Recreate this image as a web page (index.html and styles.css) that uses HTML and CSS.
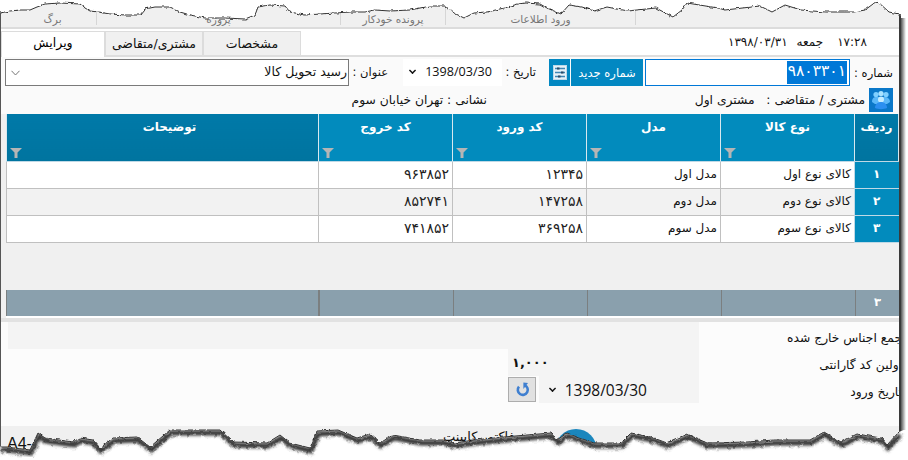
FILE: index.html
```html
<!DOCTYPE html>
<html lang="fa">
<head>
<meta charset="utf-8">
<title>ویرایش</title>
<link rel="stylesheet" href="styles.css">
</head>
<body>
<div class="window" dir="rtl">
  <div class="ribbon">
    <span class="rib r1"></span>
    <span class="rib r2">ورود اطلاعات</span>
    <span class="rib r3">پرونده خودکار</span>
    <span class="rib r4">پروژه</span>
    <span class="rib r5">برگ</span>
  </div>
  <div class="tabrow">
    <div class="clock"><span>۱۷:۲۸</span><span>جمعه</span><span>۱۳۹۸/۰۳/۳۱</span></div>
    <div class="tabs" dir="ltr">
      <div class="tab active">ویرایش</div>
      <div class="tab">مشتری/متقاضی</div>
      <div class="tab">مشخصات</div>
    </div>
  </div>
  <div class="formrow">
    <span class="lbl lbl-num">شماره :</span>
    <div class="numbox"><span class="sel">۹۸۰۳۳۰۱</span></div>
    <button class="bluebtn">شماره جدید</button>
    <div class="iconbtn">
      <svg width="14" height="15" viewBox="0 0 14 15"><rect x="0.5" y="0.5" width="13" height="14" fill="#e8f2f8" stroke="#bcd9ea"/><path d="M2 3.5h10M2 7.5h10M2 11.5h10" stroke="#3f86b5" stroke-width="1.3"/><rect x="4" y="2.5" width="2.5" height="2" fill="#2a4a66"/><rect x="8" y="6.5" width="2.5" height="2" fill="#2a4a66"/><rect x="5" y="10.5" width="2.5" height="2" fill="#2a4a66"/></svg>
    </div>
    <span class="lbl lbl-date">تاریخ :</span>
    <div class="datebox"><span class="dt" dir="ltr">1398/03/30</span><span class="chev"></span></div>
    <span class="lbl lbl-title">عنوان :</span>
    <div class="combo"><span>رسید تحویل کالا</span><svg class="combo-arrow" width="9" height="6" viewBox="0 0 9 6"><path d="M.5 .8L4.5 5 8.5 .8" fill="none" stroke="#777"/></svg></div>
  </div>
  <div class="inforow">
    <div class="people">
      <svg width="24" height="24" viewBox="0 0 24 24"><circle cx="7" cy="6.5" r="2.6" fill="#7fd0ff"/><circle cx="17" cy="6.5" r="2.6" fill="#7fd0ff"/><circle cx="12" cy="5.5" r="2.6" fill="#a8e2ff"/><path d="M3 14c0-4 2-5 4-5s10 0 10 0 4 1 4 5l-3 2H6z" fill="#5ab8f8"/><circle cx="12" cy="11.5" r="3" fill="#c4ecff"/><path d="M6 20c0-4 3-6 6-6s6 2 6 6c-3 1.5-9 1.5-12 0z" fill="#2b8ff0"/></svg>
    </div>
    <span class="cust">مشتری / متقاضی :&nbsp;&nbsp; مشتری اول</span>
    <span class="addr">نشانی : تهران خیابان سوم</span>
  </div>
  <div class="gridwrap">
    <table class="grid">
      <colgroup>
        <col class="c-r"><col class="c-m"><col class="c-m"><col class="c-m"><col class="c-m"><col>
      </colgroup>
      <thead>
        <tr>
          <th class="dark">ردیف</th>
          <th>نوع کالا<svg class="fn" viewBox="0 0 12 10"><path d="M0 0h12L7.5 4.5V10h-3V4.5z"/></svg></th>
          <th>مدل<svg class="fn" viewBox="0 0 12 10"><path d="M0 0h12L7.5 4.5V10h-3V4.5z"/></svg></th>
          <th>کد ورود<svg class="fn" viewBox="0 0 12 10"><path d="M0 0h12L7.5 4.5V10h-3V4.5z"/></svg></th>
          <th>کد خروج<svg class="fn" viewBox="0 0 12 10"><path d="M0 0h12L7.5 4.5V10h-3V4.5z"/></svg></th>
          <th class="dark last">توضیحات<svg class="fn" viewBox="0 0 12 10"><path d="M0 0h12L7.5 4.5V10h-3V4.5z"/></svg></th>
        </tr>
      </thead>
      <tbody>
        <tr><td class="idx">۱</td><td>کالای نوع اول</td><td>مدل اول</td><td class="num">۱۲۳۴۵</td><td class="num">۹۶۳۸۵۲</td><td></td></tr>
        <tr class="alt"><td class="idx">۲</td><td>کالای نوع دوم</td><td>مدل دوم</td><td class="num">۱۴۷۲۵۸</td><td class="num">۸۵۲۷۴۱</td><td></td></tr>
        <tr><td class="idx">۳</td><td>کالای نوع سوم</td><td>مدل سوم</td><td class="num">۳۶۹۲۵۸</td><td class="num">۷۴۱۸۵۲</td><td></td></tr>
      </tbody>
    </table>
    <div class="gridgap"></div>
    <div class="totals">
      <div class="tc t-r">۳</div><div class="tc t-m"></div><div class="tc t-m"></div><div class="tc t-m"></div><div class="tc t-m"></div><div class="tc t-l"></div>
    </div>
  </div>
  <div class="divider"></div>
  <div class="details">
    <div class="labels">
      <div class="dl">جمع اجناس خارج شده</div>
      <div class="dl">اولین کد گارانتی</div>
      <div class="dl">تاریخ ورود</div>
    </div>
    <div class="values">
      <div class="v-top"></div>
      <div class="v-mid">
        <div class="v-panel">
          <div class="amount">۱,۰۰۰</div>
          <div class="date2">
            <div class="field"><span class="dt2" dir="ltr">1398/03/30</span><span class="chev"></span></div>
            <button class="refresh"><svg width="15" height="15" viewBox="0 0 15 15"><path d="M4 4.6A5 5 0 1 0 9.6 3.2" fill="none" stroke="#3f7fd0" stroke-width="2.6"/><path d="M8.4 0.4L13 1 8.4 7z" fill="#3f7fd0"/></svg></button>
          </div>
        </div>
        <div class="v-side"></div>
      </div>
    </div>
  </div>
  <div class="footer">
    <span class="foot-a" dir="ltr">A4-</span>
    <span class="foot-b">فاکتور کابینت</span>
    <span class="foot-c"></span>
  </div>
</div>
<svg class="tear" width="908" height="460" viewBox="0 0 908 460" aria-hidden="true">
  <defs>
    <filter id="rough" x="-2%" y="-10%" width="104%" height="120%" color-interpolation-filters="sRGB">
      <feTurbulence type="fractalNoise" baseFrequency="0.22" numOctaves="2" seed="4"/>
      <feDisplacementMap in="SourceGraphic" scale="3.5" xChannelSelector="R" yChannelSelector="G"/>
    </filter>
    <filter id="soft" x="-2%" y="-20%" width="104%" height="140%"><feGaussianBlur stdDeviation="1.8"/></filter>
    <linearGradient id="rs" x1="0" x2="1" y1="0" y2="0"><stop offset="0" stop-color="#555"/><stop offset="1" stop-color="#fff"/></linearGradient>
    <clipPath id="below"><path d="M-5 447L7 447L30 450L38 433L45 438L73 442L80 438L93 440L100 448L113 438L137 437L150 447L170 430L220 430L233 442L267 443L280 435L290 443L310 448L317 431L338 430L357 438L370 434L380 443L393 435L420 440L443 440L454 443L474 440L504 437L527 435L551 433L557 440L567 433L577 437L594 443L621 443L631 433L651 437L667 443L687 434L707 443L747 442L774 440L810 440L824 432L841 442L857 434L881 438L887 445L899 432L915 425V465H-5Z"/></clipPath>
  </defs>
  <rect x="901" y="18" width="5" height="415" fill="url(#rs)"/>
  <g filter="url(#rough)">
    <path class="paper" d="M-5 -5H915V16L899 14L889 12L877 1L865 10L854 12L847 12L825 12L801 10L785 5L772 12L760 6L725 10L718 8L687 3L682 10L673 17L656 8L627 11L607 7L594 11L582 7L569 5L561 14L547 8L540 4L525 3L518 4L504 8L487 12L474 13L464 18L454 13L445 6L430 6L420 8L410 10L390 11L375 10L365 12L350 12L335 13L320 14L305 15L290 12L285 6L270 5L258 7L255 15L245 19L225 18L205 18L190 15L180 12L170 7L155 7L145 9L140 15L125 15L110 14L98 12L90 11L85 8L80 4L70 3L60 3L48 3L45 4L37 7L30 10L20 10L10 11L0 13L-5 13Z"/>
    <path class="paper" d="M-5 447L7 447L30 450L38 433L45 438L73 442L80 438L93 440L100 448L113 438L137 437L150 447L170 430L220 430L233 442L267 443L280 435L290 443L310 448L317 431L338 430L357 438L370 434L380 443L393 435L420 440L443 440L454 443L474 440L504 437L527 435L551 433L557 440L567 433L577 437L594 443L621 443L631 433L651 437L667 443L687 434L707 443L747 442L774 440L810 440L824 432L841 442L857 434L881 438L887 445L899 432L915 425V465H-5Z"/>
    <g clip-path="url(#below)">
      <path class="shade" filter="url(#soft)" d="M0 447L7 447L30 450L38 433L45 438L73 442L80 438L93 440L100 448L113 438L137 437L150 447L170 430L220 430L233 442L267 443L280 435L290 443L310 448L317 431L338 430L357 438L370 434L380 443L393 435L420 440L443 440L454 443L474 440L504 437L527 435L551 433L557 440L567 433L577 437L594 443L621 443L631 433L651 437L667 443L687 434L707 443L747 442L774 440L810 440L824 432L841 442L857 434L881 438L887 445L899 432"/>
    </g>
    <path class="edge" d="M0 447L7 447L30 450L38 433L45 438L73 442L80 438L93 440L100 448L113 438L137 437L150 447L170 430L220 430L233 442L267 443L280 435L290 443L310 448L317 431L338 430L357 438L370 434L380 443L393 435L420 440L443 440L454 443L474 440L504 437L527 435L551 433L557 440L567 433L577 437L594 443L621 443L631 433L651 437L667 443L687 434L707 443L747 442L774 440L810 440L824 432L841 442L857 434L881 438L887 445L899 432"/>
    <path class="edge" d="M0 13L10 11L20 10L30 10L37 7L45 4L60 3L80 4L85 8L90 11L98 12L110 14L125 15L140 15L145 9L155 7L170 7L180 12L190 15L205 18L225 18L245 19L255 15L258 7L270 5L285 6L290 12L305 15L320 14L335 13L350 12L365 12L375 10L390 11L410 10L420 8L430 6L445 6L454 13L464 18L474 13L487 12L504 8L518 4L525 3L540 4L547 8L561 14L569 5L582 7L594 11L607 7L627 11L656 8L673 17L682 10L687 3L718 8L725 10L760 6L772 12L785 5L801 10L825 12L847 12L854 12L865 10L877 1L889 12L899 14"/>
  </g>
</svg>
</body>
</html>
```
FILE: styles.css
```css
* { box-sizing: border-box; }
html, body { margin: 0; padding: 0; background: #fff; overflow: hidden; }
body { width: 908px; height: 460px; position: relative; font-family: "DejaVu Sans", "Noto Sans", sans-serif; color: #111; }
.window { width: 901px; height: 460px; border-right: 2px solid #3a3a3a; border-left: 1px solid #555; background: #fff; display: flex; flex-direction: column; font-size: 11.5px; }

.ribbon { height: 29px; flex: none; background: #f0f0f0; border-bottom: 2px solid #dcdcdc; display: flex; direction: ltr; flex-direction: row-reverse; }
.rib { color: #777; font-size: 10.5px; border-left: 1px solid #d6d6d6; height: 25px; padding-top: 13px; text-align: center; line-height: 12px; white-space: nowrap; }
.r1 { width: 264px; }
.r2 { width: 190px; }
.r3 { width: 105px; }
.r4 { width: 244px; }
.r5 { width: 95px; border-left: 0; padding-left: 8px; }

.tabrow { height: 28px; flex: none; display: flex; align-items: flex-end; justify-content: space-between; border-bottom: 2px solid #dedede; }
.clock { display: flex; gap: 9px; height: 26px; align-items: center; padding-right: 32px; font-size: 12px; }
.clock span:first-child { margin-left: 5px; }
.tabs { display: flex; height: 26px; margin-bottom: -2px; align-items: flex-end; }
.tab { width: 98px; height: 24px; background: #f0f0f0; border: 1px solid #dcdcdc; border-bottom: 0; text-align: center; line-height: 23px; font-size: 12.5px; margin-bottom: 2px; }
.tab.active { width: 104px; height: 26px; background: #fff; margin-bottom: 0; line-height: 22px; color: #000; }

.formrow { height: 30px; flex: none; display: flex; align-items: center; padding-top: 1px; background: #fafafa; }
.lbl { white-space: nowrap; font-size: 11.5px; }
.lbl-num { width: 49px; padding-right: 6px; flex: none; }
.numbox { width: 205px; height: 27px; flex: none; border: 1px solid #0078d7; background: #fff; padding: 1px 2px; overflow: hidden; }
.sel { display: inline-block; background: #0078d7; color: #fff; height: 23px; line-height: 21px; font-size: 15.5px; padding: 0 1px; white-space: nowrap; }
.bluebtn { width: 72px; height: 27px; flex: none; margin-right: 2px; background: #0288c2; color: #fff; border: 0; padding: 0; font: 11.5px "DejaVu Sans", sans-serif; }
.iconbtn { width: 21px; height: 27px; flex: none; margin-right: 1px; background: #0288c2; display: flex; align-items: center; justify-content: center; }
.lbl-date { width: 47px; padding-right: 13px; flex: none; margin-top: -2px; }
.datebox { width: 99px; height: 27px; flex: none; display: flex; align-items: center; gap: 9px; padding: 0 10px 2px 0; background: #fff; }
.dt { font: 12.6px "Open Sans", "Liberation Sans", sans-serif; color: #111; }
.chev { width: 7px; height: 7px; display: inline-block; border-right: 2px solid #111; border-bottom: 2px solid #111; transform: rotate(45deg) scale(.72); margin-top: -3px; flex: none; }
.lbl-title { width: 54px; padding-right: 15px; flex: none; margin-top: -2px; }
.combo { width: 344px; height: 27px; flex: none; border: 1px solid #7a7a7a; background: #fff; display: flex; align-items: center; justify-content: space-between; padding: 0 1px 3px 5px; font-size: 12.5px; }
.combo-arrow { margin-top: 3px; }

.inforow { height: 27px; flex: none; display: flex; align-items: center; padding-right: 6px; white-space: nowrap; background: #fafafa; font-size: 12.3px; }
.people { width: 24px; height: 24px; background: #0a78c8; margin-top: -2px; flex: none; }
.people svg { display: block; }
.cust { margin-right: 4px; margin-top: -2px; width: 169px; flex: none; }
.addr { margin-right: 209px; margin-top: -2px; }

.gridwrap { flex: none; padding: 0 0 0 5px; background: #f0f0f0; height: 204px; display: flex; flex-direction: column; }
.grid { width: 893px; border-collapse: collapse; table-layout: fixed; flex: none; font-size: 12px; background: #fff; }
.c-r { width: 44px; }
.c-m { width: 134px; }
.grid th { height: 47px; background: #028bbd; color: #fff; border: 1px solid #d8e8ef; border-top: 0; border-bottom: 1px solid #bfd9e6; font-weight: bold; font-size: 12px; vertical-align: top; padding: 6px 0 0; position: relative; text-align: center; }
.grid th.dark { background: linear-gradient(#0079a8, #00749f); }
.grid th.last { padding-left: 14px; }
.fn { position: absolute; left: 3px; bottom: 3px; width: 12px; height: 10px; fill: #b5b5b5; }
.grid td { height: 27px; border: 1px solid #c0c0c0; padding: 0 3px 2px; text-align: right; white-space: nowrap; }
.grid td.num { font-size: 14px; color: #222; }
.grid .alt td { background: #f2f2f2; }
.grid td.idx { background: #028bbd; color: #fff; text-align: center; font-weight: bold; border-color: #bfd9e6; border-right: 0; }
.gridgap { flex: 1; }
.totals { height: 28px; flex: none; display: flex; width: 893px; background: #fff; }
.tc { height: 26px; background: #8aa0ad; border-left: 1px solid #7b7f80; color: #fff; }
.t-r { width: 44px; text-align: center; line-height: 24px; font-weight: bold; }
.t-m { width: 134px; }
.t-l { flex: 1; border-right: 1px solid #7b7f80; }

.divider { height: 4px; flex: none; background: #e2e2e2; }
.details { height: 104px; flex: none; display: flex; background: #fcfcfc; }
.labels { width: 200px; flex: none; overflow: hidden; padding-top: 8px; }
.dl { height: 27px; white-space: nowrap; line-height: 16px; font-size: 12.3px; margin-right: -3px; }
.values { flex: 1; display: flex; flex-direction: column; margin-left: 7px; }
.v-top { height: 27px; background: #f4f4f4; }
.v-mid { height: 54px; display: flex; }
.v-panel { width: 191px; flex: none; display: flex; flex-direction: column; }
.amount { font-size: 13px; font-weight: bold; height: 27px; line-height: 28px; text-align: left; padding-left: 4px; background: #f4f4f4; }
.date2 { display: flex; height: 27px; align-items: center; }
.field { width: 160px; height: 27px; flex: none; background: #f4f4f4; display: flex; align-items: center; gap: 9px; padding-right: 52px; }
.dt2 { font: 15.5px "Open Sans", "Liberation Sans", sans-serif; color: #111; white-space: nowrap; }
.v-side { flex: 1; background: #fcfcfc; }
.refresh { width: 28px; height: 25px; background: #e1e1e1; border: 1px solid #adadad; padding: 0; display: flex; align-items: center; justify-content: center; margin-right: 3px; flex: none; }

.footer { flex: 1; background: #f0f0f0; position: relative; overflow: hidden; }
.foot-a { position: absolute; left: 6px; top: 9px; font: 16px "Liberation Sans", sans-serif; color: #111; }
.foot-b { position: absolute; left: 442px; top: 3px; font-size: 13px; white-space: nowrap; }
.foot-c { position: absolute; left: 554px; top: 3px; width: 42px; height: 42px; border-radius: 50%; background: #1a86bd; }

.tear { position: absolute; left: 0; top: 0; pointer-events: none; }
.paper { fill: #fff; }
.edge { fill: none; stroke: #333; stroke-width: 1; }
.shade { fill: none; stroke: #333; stroke-width: 5; transform: translate(1px, 3px); }
```
